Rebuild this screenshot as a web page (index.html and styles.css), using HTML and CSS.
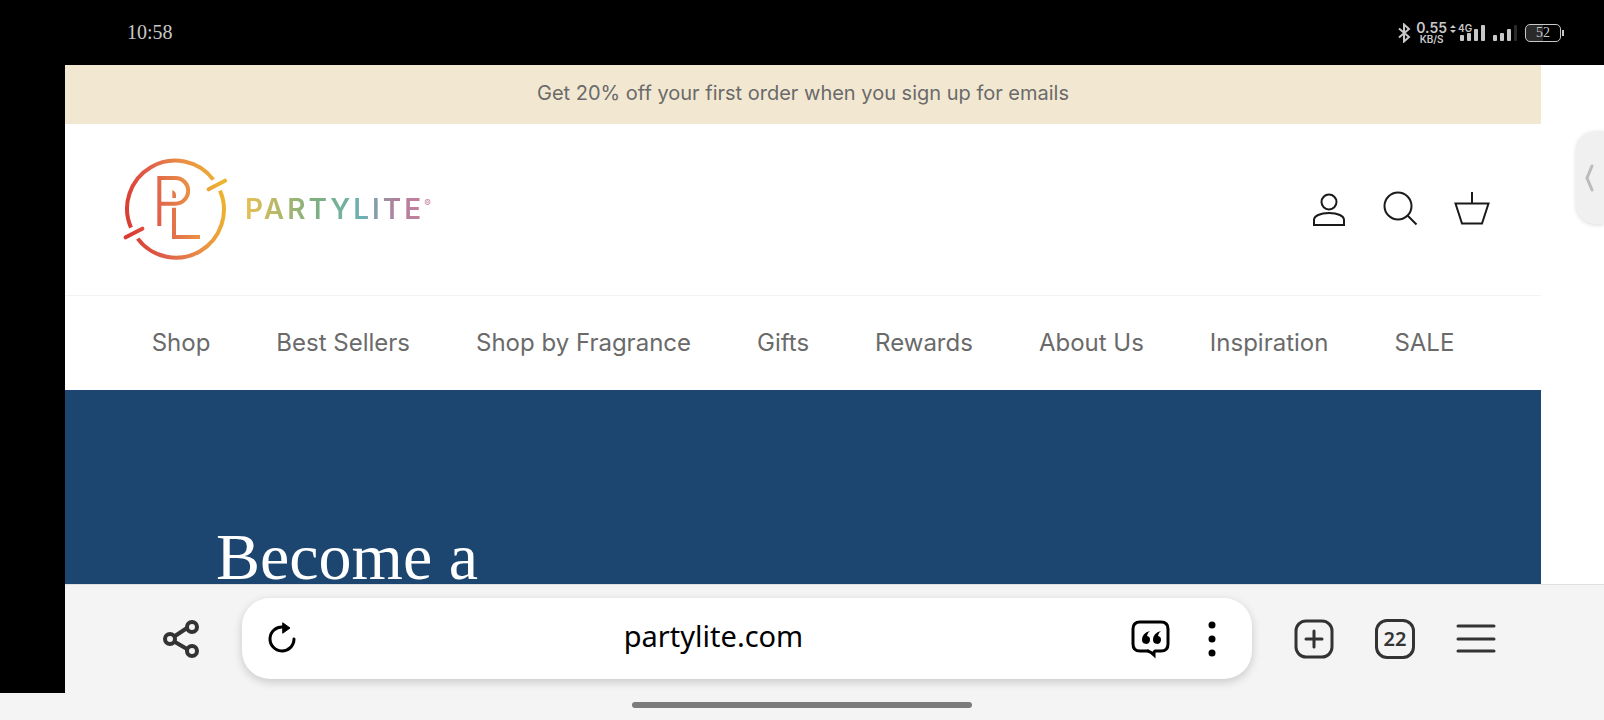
FILE: index.html
```html
<!DOCTYPE html>
<html lang="en">
<head>
    <meta charset="UTF-8">
    <meta name="viewport" content="width=device-width, initial-scale=1.0">
    <title>PartyLite</title>
    <link rel="stylesheet" href="styles.css">
</head>
<body>

<!-- Phone status bar -->
<div class="status-bar">
    <span class="clock">10:58</span>
    <div class="status-icons">
        <svg class="bluetooth" width="14" height="20" viewBox="0 0 14 20">
            <path d="M2 5.500l10 8.500-5 4.500V1.500l5 4.500-10 8.500"/>
        </svg>
        <div class="net-speed">
            <span class="speed">0.55</span>
            <span class="unit">KB/S</span>
        </div>
        <div class="signal-main">
            <svg width="36" height="20" viewBox="0 0 36 20">
                <path d="M1 5l3-3 3 3zM1 7l3 3 3-3z"/>
                <rect x="11" y="12" width="4" height="6" rx="1"/>
                <rect x="18" y="10" width="4" height="8" rx="1"/>
                <rect x="25" y="6" width="4" height="12" rx="1"/>
                <rect x="32" y="2" width="4" height="16" rx="1"/>
            </svg>
            <span class="network">4G</span>
        </div>
        <svg class="signal-second" width="24" height="16" viewBox="0 0 24 16">
            <rect x="0" y="10" width="4" height="6" rx="1"/>
            <rect x="7" y="8" width="4" height="8" rx="1"/>
            <rect x="14" y="4" width="4" height="12" rx="1"/>
            <rect class="off" x="21" y="0" width="3" height="16" rx="1"/>
        </svg>
        <div class="battery"><span>52</span></div>
    </div>
</div>

<div class="screen">
    <div class="cutout"></div>
    <div class="browser">

        <!-- Website -->
        <div class="viewport">
            <div class="site">
                <div class="promo">Get 20% off your first order when you sign up for emails</div>

                <header class="site-header">
                    <a href="#" class="logo" aria-label="PartyLite">
                        <svg width="105" height="102" viewBox="38 38 315 306">
                            <defs>
                                <linearGradient id="logoFill" gradientUnits="userSpaceOnUse" x1="45" y1="220" x2="345" y2="160">
                                    <stop offset="0" stop-color="#d93a32"/>
                                    <stop offset="0.35" stop-color="#e0644c"/>
                                    <stop offset="0.65" stop-color="#e98d45"/>
                                    <stop offset="1" stop-color="#edb42f"/>
                                </linearGradient>
                            </defs>
                            <g fill="none" stroke="url(#logoFill)" stroke-width="12">
                                <path d="M62 247A144 144 0 0 1 309 103"/>
                                <path d="M329 136A144 144 0 0 1 82 280"/>
                                <path stroke-linecap="round" d="M295 132l49-26M46 276l50-26"/>
                                <path d="M147 242V98h48a38.500 38.500 0 0 1 0 77h-48"/>
                                <path d="M191 187v88h78"/>
                            </g>
                            <path fill="url(#logoFill)" d="M186 134q11 5 11 15v9h-11z"/>
                        </svg>
                        <span class="wordmark">PARTYLITE<sup>®</sup></span>
                    </a>
                    <div class="header-actions">
                        <a href="#" aria-label="Account">
                            <svg width="36" height="36" viewBox="0 0 36 36">
                                <circle cx="19" cy="11" r="7.500"/>
                                <path d="M4 34v-5c0-4 6-7 15-7s15 3 15 7v5z"/>
                            </svg>
                        </a>
                        <a href="#" aria-label="Search">
                            <svg width="36" height="36" viewBox="0 0 36 36">
                                <circle cx="16" cy="15" r="13.500"/>
                                <path d="M25.500 24.500l9 9"/>
                            </svg>
                        </a>
                        <a href="#" aria-label="Cart">
                            <svg width="36" height="36" viewBox="0 0 36 36">
                                <path d="M1.500 12.500h33L28 32.500H8zM18 1v11"/>
                            </svg>
                        </a>
                    </div>
                </header>

                <nav class="main-nav">
                    <a href="#">Shop</a>
                    <a href="#">Best Sellers</a>
                    <a href="#">Shop by Fragrance</a>
                    <a href="#">Gifts</a>
                    <a href="#">Rewards</a>
                    <a href="#">About Us</a>
                    <a href="#">Inspiration</a>
                    <a href="#">SALE</a>
                </nav>

                <section class="hero">
                    <h1>Become a</h1>
                </section>
            </div>
        </div>

        <!-- Browser toolbar -->
        <div class="toolbar">
            <button type="button" class="share" aria-label="Share">
                <svg width="40" height="40" viewBox="0 0 40 40">
                    <path d="M13 17l12-8M13 23l12 7"/>
                    <circle cx="8" cy="20" r="5"/>
                    <circle cx="30" cy="8" r="5"/>
                    <circle cx="30" cy="32" r="5"/>
                </svg>
            </button>
            <div class="address-bar">
                <button type="button" aria-label="Reload">
                    <svg width="40" height="40" viewBox="0 0 40 40">
                        <path d="M32 20a12 12 0 1 1-11-12"/>
                        <path class="solid" d="M21 4l7 5-7 5z"/>
                    </svg>
                </button>
                <input type="text" value="partylite.com" aria-label="Address">
                <button type="button" aria-label="Summary">
                    <svg width="40" height="40" viewBox="0 0 40 40">
                        <path d="M17 32H9q-7 0-7-7V10q0-7 7-7h21q7 0 7 7v15q0 7-7 7h-6"/>
                        <path d="M17 32q3 1 6 4v-3"/>
                        <path class="quotes" d="M19 12q-8 2-8 9a4 4 0 1 0 5-4q0-3 3-5zM30 12q-8 2-8 9a4 4 0 1 0 5-4q0-3 3-5z"/>
                    </svg>
                </button>
                <button type="button" aria-label="More">
                    <svg width="40" height="40" viewBox="0 0 40 40">
                        <circle class="dot" cx="20" cy="6" r="3.500"/>
                        <circle class="dot" cx="20" cy="20" r="3.500"/>
                        <circle class="dot" cx="20" cy="34" r="3.500"/>
                    </svg>
                </button>
            </div>
            <div class="tools">
                <button type="button" aria-label="New tab">
                    <svg width="40" height="40" viewBox="0 0 40 40">
                        <rect x="2" y="2" width="36" height="36" rx="10"/>
                        <path d="M20 12v16M12 20h16"/>
                    </svg>
                </button>
                <button type="button" class="tabs" aria-label="Tabs">22</button>
                <button type="button" aria-label="Menu">
                    <svg width="40" height="40" viewBox="0 0 40 40">
                        <path d="M2 7h36M2 20h36M2 32h36"/>
                    </svg>
                </button>
            </div>
        </div>
    </div>
</div>

<div class="gesture-bar"><div class="handle"></div></div>

<!-- Edge panel handle -->
<div class="edge-tab">
    <svg width="10" height="30" viewBox="0 0 10 30">
        <path d="M7 3L2 15l5 12"/>
    </svg>
</div>

</body>
</html>
```
FILE: styles.css
```css
* {
    box-sizing: border-box;
}
body {
    margin: 0;
    height: 100vh;
    display: flex;
    flex-direction: column;
    position: relative;
    overflow: hidden;
    background: #000;
    font-family: Inter, "Liberation Sans", sans-serif;
}
a {
    color: inherit;
    text-decoration: none;
}
button {
    display: flex;
    align-items: center;
    justify-content: center;
    padding: 0;
    border: none;
    background: none;
    cursor: pointer;
}
svg {
    display: block;
}

/* Status bar */
.status-bar {
    height: 65px;
    flex: none;
    display: flex;
    align-items: center;
    justify-content: space-between;
    padding: 0 40px 0 127px;
    color: #c8c8c8;
}
.clock {
    font-family: "Liberation Serif", serif;
    font-size: 20px;
}
.status-icons {
    display: flex;
    align-items: center;
    gap: 8px;
}
.bluetooth {
    fill: none;
    stroke: #c8c8c8;
    stroke-width: 2;
}
.net-speed {
    display: flex;
    flex-direction: column;
    align-items: center;
    font-weight: 600;
    margin: 0 -6px 0 -3px;
}
.speed {
    font-size: 14px;
    line-height: 12px;
}
.unit {
    font-size: 10px;
    line-height: 10px;
}
.signal-main {
    position: relative;
    fill: #c8c8c8;
}
.network {
    position: absolute;
    top: 0;
    left: 9px;
    font-size: 10px;
    font-weight: 600;
    line-height: 10px;
}
.signal-second {
    fill: #c8c8c8;
}
.signal-second .off {
    fill: #2a2a2a;
}
.battery {
    position: relative;
    width: 36px;
    height: 18px;
    margin-right: 3px;
    border: 1px solid #c8c8c8;
    border-radius: 5px;
    background: linear-gradient(90deg, #2a2a2a 50%, #000 50%);
    font-family: "Liberation Serif", serif;
    font-size: 14px;
    line-height: 16px;
    text-align: center;
}
.battery::after {
    content: "";
    position: absolute;
    right: -4px;
    top: 5px;
    width: 2px;
    height: 6px;
    background: #c8c8c8;
}

/* Screen */
.screen {
    flex: 1;
    min-height: 0;
    display: flex;
}
.cutout {
    width: 65px;
    flex: none;
    background: #000;
}
.browser {
    flex: 1;
    min-width: 0;
    display: flex;
    flex-direction: column;
    background: #fff;
}
.viewport {
    flex: 1;
    min-height: 0;
    display: flex;
    overflow: hidden;
    padding-right: 63px;
}
.site {
    flex: 1;
    display: flex;
    flex-direction: column;
    color: #6a6a6a;
}
.promo {
    padding: 13px 20px 16px;
    background: #f2e8d2;
    font-size: 20px;
    line-height: 30px;
    text-align: center;
}
.site-header {
    display: flex;
    align-items: center;
    justify-content: space-between;
    padding: 34px 51px 35px 58px;
    border-bottom: 1px solid #f3f3f3;
}
.logo {
    display: flex;
    align-items: center;
    gap: 17px;
}
.wordmark {
    font-size: 28px;
    font-weight: 600;
    line-height: 36px;
    letter-spacing: 3px;
    color: transparent;
    background: linear-gradient(90deg, #e9bf55, #80b07d 35%, #6cb0b3 62%, #b07f9b 80%, #d07f9f);
    -webkit-background-clip: text;
    background-clip: text;
}
.wordmark sup {
    font-size: 10px;
    line-height: 10px;
    vertical-align: 12px;
}
.header-actions {
    display: flex;
    gap: 36px;
    fill: none;
    stroke: #1a1a1a;
    stroke-width: 2;
}
.main-nav {
    display: flex;
    justify-content: center;
    gap: 66px;
    padding: 32px 0;
    font-size: 24px;
    line-height: 30px;
    white-space: nowrap;
}
.hero {
    flex: 1;
    padding: 140px 151px 0;
    background: #1c456f;
    color: #fff;
}
.hero h1 {
    margin: 0;
    font-family: "Liberation Serif", serif;
    font-size: 66px;
    font-weight: 400;
    line-height: 54px;
}

/* Toolbar */
.toolbar {
    flex: none;
    display: flex;
    align-items: center;
    padding: 13px 108px 14px 97px;
    border-top: 1px solid #e0e0e0;
    background: #f4f4f4;
    fill: none;
    stroke: #333;
    stroke-width: 3;
    stroke-linecap: round;
}
.share {
    margin-right: 40px;
    stroke-width: 4;
}
.address-bar {
    flex: 1;
    min-width: 0;
    display: flex;
    align-items: center;
    gap: 21px;
    height: 81px;
    padding: 0 20px;
    border-radius: 28px;
    background: #fff;
    box-shadow: 0 3px 10px rgba(0, 0, 0, 0.18);
    stroke: #000;
}
.address-bar input {
    flex: 1;
    min-width: 0;
    padding: 0 6px 6px 0;
    border: none;
    outline: none;
    background: none;
    color: #000;
    font-family: "Noto Sans", sans-serif;
    font-size: 29px;
    text-align: center;
}
.address-bar .solid {
    fill: #000;
    stroke-width: 1;
}
.address-bar .dot,
.address-bar .quotes {
    fill: #000;
    stroke: none;
}
.tools {
    display: flex;
    gap: 41px;
    margin-left: 42px;
}
.tabs {
    width: 40px;
    height: 40px;
    border: 3px solid #333;
    border-radius: 12px;
    color: #333;
    font-family: "Noto Sans", sans-serif;
    font-size: 20px;
    font-weight: 600;
}
.gesture-bar {
    height: 27px;
    flex: none;
    display: flex;
    justify-content: center;
    align-items: center;
    padding-bottom: 3px;
    background: #f4f4f4;
}
.handle {
    width: 340px;
    height: 6px;
    border-radius: 3px;
    background: #7b7b7b;
}

/* Edge tab sits over the page */
.edge-tab {
    position: absolute;
    top: 131px;
    right: 0;
    width: 28px;
    height: 93px;
    display: flex;
    align-items: center;
    padding-left: 9px;
    border-radius: 20px 0 0 20px;
    background: #f0f0f0;
    box-shadow: 0 1px 4px rgba(0, 0, 0, 0.15);
    fill: none;
    stroke: #bbb;
    stroke-width: 3;
    stroke-linecap: round;
}
```
